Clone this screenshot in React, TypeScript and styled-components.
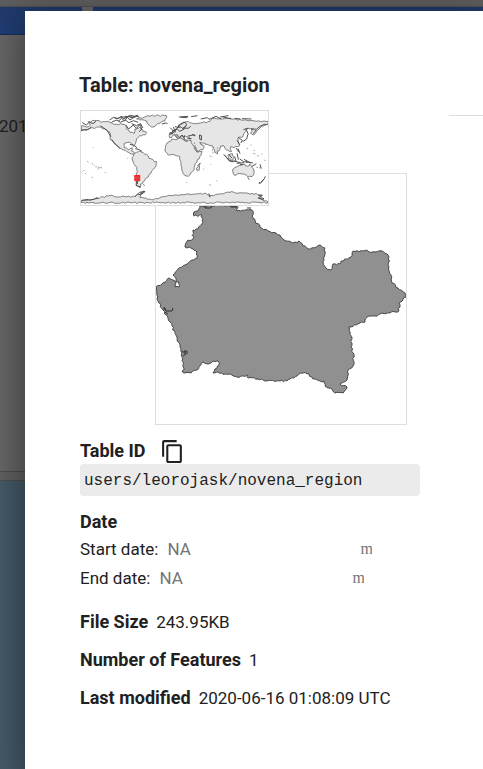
import React from "react";
import styled, { createGlobalStyle } from "styled-components";

const GlobalStyle = createGlobalStyle`
  * { box-sizing: border-box; }
  body {
    margin: 0;
    font-family: Roboto, "Liberation Sans", sans-serif;
    font-size: 17px;
    color: #212121;
    overflow: hidden;
  }
`;

const Screen = styled.div`
  position: relative;
  min-height: 100vh;
  display: flex;
  flex-direction: column;
  background: #686868;
  overflow: hidden;
`;

const TopStrip = styled.div`
  height: 7px;
  background: #5e5e5e;
  border-bottom: 1px solid #505050;
`;

const Toolbar = styled.div`
  display: grid;
  grid-template-columns: 82px 1fr;
  gap: 11px;
  height: 28px;
`;

const ToolbarPanel = styled.div`
  background: linear-gradient(#1f3a6b, #213e76);
  border-bottom: 1px solid #172d57;
`;

const Backpage = styled.div`
  flex: 0 0 436px;
  padding-top: 80px;
  margin-left: -1px;
  line-height: 22px;
`;

const Splitter = styled.div`
  height: 10px;
  background: #626262;
  border-top: 1px solid #4c4c4c;
  border-bottom: 1px solid #524f4c;
`;

const MapArea = styled.div`
  flex: 1;
  background: #475c6b;
`;

const Dialog = styled.section`
  position: absolute;
  inset: 11px 0 0 25px;
  display: grid;
  grid-template-columns: minmax(0, 1fr) 34px;
  gap: 29px;
  padding: 60px 0 0 55px;
  background: #fff;
  box-shadow: 0 12px 36px 4px rgba(0, 0, 0, 0.45);
`;

const SidePanel = styled.aside`
  margin-top: 44px;
  border-top: 1px solid #ddd;
`;

const Title = styled.h1`
  margin: 0 0 11px -1px;
  font-size: 20px;
  font-weight: 700;
  line-height: 28px;
`;

const Thumbnails = styled.div`
  position: relative;
  padding: 63px 0 0 75px;
`;

const Frame = styled.div<{ $width: number; $height: number; $over?: boolean }>`
  position: ${(p) => (p.$over ? "absolute" : "static")};
  top: 0;
  left: 0;
  width: ${(p) => p.$width}px;
  height: ${(p) => p.$height}px;
  border: 1px solid #ddd;
  background: #fff;

  svg {
    display: block;
    width: 100%;
    height: 100%;
  }
`;

const IdHeading = styled.div`
  display: flex;
  align-items: center;
  gap: 14px;
  height: 26px;
  margin: 13px 0 0;
`;

const Heading = styled.h2`
  margin: 0;
  font-size: 18px;
  font-weight: 700;
  line-height: 24px;
`;

const CopyButton = styled.button`
  display: flex;
  padding: 0;
  border: 0;
  background: none;
  color: #212121;
  cursor: pointer;
`;

const AssetId = styled.code`
  display: block;
  height: 32px;
  padding: 2px 4px 0;
  border-radius: 4px;
  background: #ebebeb;
  font-family: "Liberation Mono", monospace;
  font-size: 16px;
  line-height: 30px;
`;

const DateSection = styled.div`
  margin-top: 14px;
`;

const DateRow = styled.div`
  display: flex;
  align-items: center;
  gap: 9px;
  height: 29px;
`;

const DateInput = styled.input`
  width: 184px;
  padding: 0;
  border: 0;
  outline: 0;
  background: none;
  font-family: Roboto, sans-serif;
  font-size: 17px;
  line-height: 24px;

  &::placeholder {
    color: #757575;
    opacity: 1;
  }
`;

const TimeInput = styled(DateInput)`
  width: 12px;
  font-family: "Liberation Serif", serif;
  font-size: 16px;
`;

const Details = styled.dl`
  display: flex;
  flex-direction: column;
  gap: 14px;
  margin: 18px 0 0;
`;

const Detail = styled.div`
  display: flex;
  gap: 8px;
  line-height: 24px;

  dt {
    font-size: 18px;
    font-weight: 700;
  }
  dd {
    margin: 0;
  }
`;

type Point = [number, number];

const toPoints = (flat: string): Point[] =>
  flat
    .trim()
    .split(/\s+/)
    .map((pair) => pair.split(",").map(Number) as Point);

/* Breaks straight edges into small steps so outlines read as coastlines. */
function coastline(flat: string, step: number, amount: number): string {
  const points = toPoints(flat);
  const out: string[] = [];
  let seed = 7;
  points.forEach(([x, y], i) => {
    const [nx, ny] = points[(i + 1) % points.length];
    const length = Math.hypot(nx - x, ny - y);
    const count = Math.max(1, Math.round(length / step));
    for (let k = 0; k < count; k += 1) {
      seed = (seed * 1103515245 + 12345) % 2147483648;
      const shift = k === 0 ? 0 : (seed / 2147483648 - 0.5) * amount;
      const px = x + ((nx - x) * k) / count - (shift * (ny - y)) / (length || 1);
      const py = y + ((ny - y) * k) / count + (shift * (nx - x)) / (length || 1);
      out.push(`${px.toFixed(1)},${py.toFixed(1)}`);
    }
  });
  return out.join(" ");
}

const REGION = `200,206 198,211 194,212 194,216 202,215 202,224 198,229 193,230 193,239 188,240
  185,247 193,249 197,252 197,258 192,260 185,265 178,269 173,275 176,278 176,282 179,282 179,287
  175,287 175,281 169,278 162,284 156,287 157,295 158,301 163,310 170,322 177,337 182,353 184,370
  182,371 185,373 191,373 197,370 203,362 207,364 213,361 219,362 219,365 215,369 213,373 218,372
  225,374 230,374 237,377 248,375 248,378 258,379 265,381 280,381 287,381 297,376 303,373 309,374
  313,379 320,381 324,381 325,386 332,389 335,393 343,393 347,387 340,384 347,380 348,370 353,366
  354,355 351,347 352,338 349,327 360,323 365,322 367,317 375,316 382,313 398,312 400,307 399,303
  406,297 405,293 398,288 392,283 391,275 388,265 389,257 382,251 375,252 363,251 353,251 351,257
  341,261 340,264 333,264 331,270 326,268 323,262 325,248 320,245 308,249 299,241 293,243 286,241
  280,235 276,233 268,231 260,227 253,218 252,210 237,211 237,206`;

const LAND = [
  `20,62 34,66 46,60 40,50 60,47 85,50 105,52 125,58 150,58 155,72 165,82 178,85 180,72 195,66
   205,80 215,82 210,90 195,92 185,102 182,115 176,124 165,112 148,115 148,128 160,134 172,128
   170,138 180,146 165,145 145,135 130,125 115,112 105,98 105,82 90,72 70,66 40,72 20,78`,
  `180,145 195,138 215,148 222,160 245,170 240,188 228,205 215,218 205,230 197,238 194,248
   184,240 183,220 188,200 186,188 175,172 172,158`,
  `185,42 220,32 275,32 270,48 250,55 235,66 225,62 215,48 195,45`,
  `274,118 290,103 318,100 330,108 348,107 358,125 368,142 382,140 375,155 362,175 358,195
   345,210 335,213 325,205 318,180 315,155 300,150 280,150 270,138 272,125`,
  `284,97 284,86 296,84 292,78 305,70 315,58 335,50 350,54 370,55 400,50 420,40 455,40 500,45
   540,48 580,49 578,58 560,65 550,75 535,90 527,84 535,70 515,72 508,85 505,95 490,98 490,108
   495,122 478,128 468,125 470,140 455,135 447,122 438,123 428,147 420,142 412,122 395,118
   375,112 388,125 384,134 366,140 356,122 348,106 345,97 325,95 312,99 300,88 290,98`,
  `475,192 492,182 510,177 518,184 525,177 532,188 538,198 532,215 520,216 510,208 495,206 478,210`,
  `369,180 377,175 373,196 366,195`,
  `459,151 473,146 479,156 472,167 461,161`,
  `18,288 60,281 100,273 150,275 180,275 205,262 195,278 230,284 285,271 395,266 405,272 465,262
   520,265 563,270 550,280 580,290 580,293 18,293`,
];

const ISLANDS = [
  "M104 45l12-8 10 4 12-5 9 5 13-7 12 4 9-5 13 3M110 51l16-6 10 7 15-7 11 8 14-6 14 5",
  "M118 38l12 3 8-6 16 2 12-6 14 3 10-4M130 49l10-9 9 8 8-11 8 8 12-8M150 34l30 3 7-5",
  "M153 60l8 12 14-12 10 10 10-12 6 15-9 7M170 56l15 6 12-6 7 13",
  "M22 53l12 7 10-9 10 5 9-7M18 75l21-1 10-8M76 62l20 14 12 20",
  "M165 118l12 3 10 8M181 131l12 3 8 5M110 103l12 15 13 13",
  "M184 225v17l14 4M190 222l-3 15M205 239l4 2M180 275l14-13 17-3M191 270l18-8M197 266l9-8",
  "M261 57l12-3 5 2M286 68l8 8-2 10-9 1M296 66l5 16M284 84l17-4 3-9",
  "M312 36l28-2M318 37l20 1M349 35l19-3M378 42l20-4 5 5 21-9 15 8M436 36l25-4M442 35l27 7M480 40l17 2M502 41l28 1",
  "M306 70l12-14 13-4 5 8-11 9 15 1 8-6M311 61l15 11 8-9M292 78l15-6 8 7 14-7M300 65l15 3",
  "M298 89l11 12M305 87l9 10 8-7 7 11M329 91l-2 13 12 2M340 93l15-3 6 3M336 99l14 2M374 90l6 2v13l-5-2zM352 88l10 3",
  "M447 148l15 17 14 6M450 151l15 18 15-1M462 147l10 13M480 155l4 15M487 145l4 19M490 131l6 15M477 168l20 5M486 175l22-2M484 129l8 12",
  "M495 162l12 8 13 2M508 163l20 11M520 171l15 3M532 184l13-8M514 166l3 7M556 178l4 13M496 178l10 1",
  "M490 97l13 9-5 8M504 110l12-8 3-13M487 106l8 13M514 71l7 18M506 74l15-5M529 73l14-1M536 86l9-13 11-9 13-6 10 1",
  "M572 214l-3 7-10 12M568 222l-13 15M555 231l-2 5M519 218l5 6",
  "M402 265l4 12M550 270l12 1-9 9 14 4M558 278l10 3M20 286l20-3 4 3 26-7",
];

const ISLETS = [
  "M28 195l-8 8m10 1l4 4M37 168l4 5M54 126l2 2M50 175l9 5M61 185l22 4M67 193l9-6M89 202l3 1M156 159l2 2M50 216l4 2",
  "M358 112l11 29M365 137l-5-12M375 116l12 6 10-7M412 124l3 21M429 127l-3 14",
  "M517 128l2 4M528 118l3 3M535 145l9 2M547 152l8 2M537 135l3 3M560 146l3 2M405 153l9 2M407 178l2 2M403 239l8 2M569 164l3 4",
  "M385 191l3 2M366 199l2 1M334 232l3 2M425 227l3 1M545 187l15 2",
];

const FLECKS = [
  "M198 205h7v3h6v-3h20v2h6",
  "M163 309h3m-2-2l2 4h6l1-3M165 312l3 2M182 351l4 3-2-3h3v3M183 356l3-2M247 208h4",
];

function WorldMap() {
  return (
    <svg viewBox="18 18 562 282" preserveAspectRatio="none" role="img" aria-label="World overview">
      <g fill="#e6e6e6" stroke="#484848" strokeWidth="2">
        {LAND.map((shape) => (
          <polygon key={shape} points={coastline(shape, 6, 5)} />
        ))}
      </g>
      <g fill="none" stroke="#505050" strokeWidth="3">
        {ISLANDS.map((line) => (
          <path key={line} d={line} />
        ))}
      </g>
      <g fill="none" stroke="#707070" strokeWidth="2" strokeDasharray="5 3">
        {ISLETS.map((line) => (
          <path key={line} d={line} />
        ))}
      </g>
      <rect x="178" y="210" width="18" height="18" fill="#f22" />
      <path d="M183 216h8v6h-8z" fill="none" stroke="#c66" strokeWidth="2" />
    </svg>
  );
}

function RegionMap() {
  return (
    <svg viewBox="156 174 250 250" role="img" aria-label="Region outline">
      <polygon points={coastline(REGION, 2, 2)} fill="#909090" stroke="#484848" strokeWidth="1" />
      {FLECKS.map((line) => (
        <path key={line} d={line} fill="none" stroke="#333" strokeWidth="1" />
      ))}
    </svg>
  );
}

function CopyIcon() {
  return (
    <svg width="25" height="25" viewBox="0 0 24 24" fill="currentColor" aria-hidden="true">
      <path d="M16 1H4c-1.1 0-2 .9-2 2v14h2V3h12V1zm3 4H8c-1.1 0-2 .9-2 2v14c0 1.1.9 2 2 2h11c1.1 0 2-.9 2-2V7c0-1.1-.9-2-2-2zm0 16H8V7h11v14z" />
    </svg>
  );
}

const dates = [
  { id: "start", label: "Start date:" },
  { id: "end", label: "End date:" },
];

const details = [
  { name: "File Size", value: "243.95KB" },
  { name: "Number of Features", value: "1" },
  { name: "Last modified", value: "2020-06-16 01:08:09 UTC" },
];

export default function App() {
  return (
    <>
      <GlobalStyle />
      <Screen>
        <TopStrip />
        <Toolbar>
          <ToolbarPanel />
          <ToolbarPanel />
        </Toolbar>
        <Backpage>201</Backpage>
        <Splitter />
        <MapArea />
        <Dialog role="dialog" aria-labelledby="title">
          <main>
            <Title id="title">Table: novena_region</Title>
            <Thumbnails>
              <Frame $width={252} $height={252}>
                <RegionMap />
              </Frame>
              <Frame $width={189} $height={96} $over>
                <WorldMap />
              </Frame>
            </Thumbnails>
            <IdHeading>
              <Heading>Table ID</Heading>
              <CopyButton type="button" aria-label="Copy table ID">
                <CopyIcon />
              </CopyButton>
            </IdHeading>
            <AssetId>users/leorojask/novena_region</AssetId>
            <DateSection>
              <Heading>Date</Heading>
              {dates.map(({ id, label }) => (
                <DateRow key={id}>
                  <label htmlFor={id}>{label}</label>
                  <DateInput id={id} placeholder="NA" />
                  <TimeInput aria-label={`${label} time`} placeholder="mm" />
                </DateRow>
              ))}
            </DateSection>
            <Details>
              {details.map(({ name, value }) => (
                <Detail key={name}>
                  <dt>{name}</dt>
                  <dd>{value}</dd>
                </Detail>
              ))}
            </Details>
          </main>
          <SidePanel />
        </Dialog>
      </Screen>
    </>
  );
}
